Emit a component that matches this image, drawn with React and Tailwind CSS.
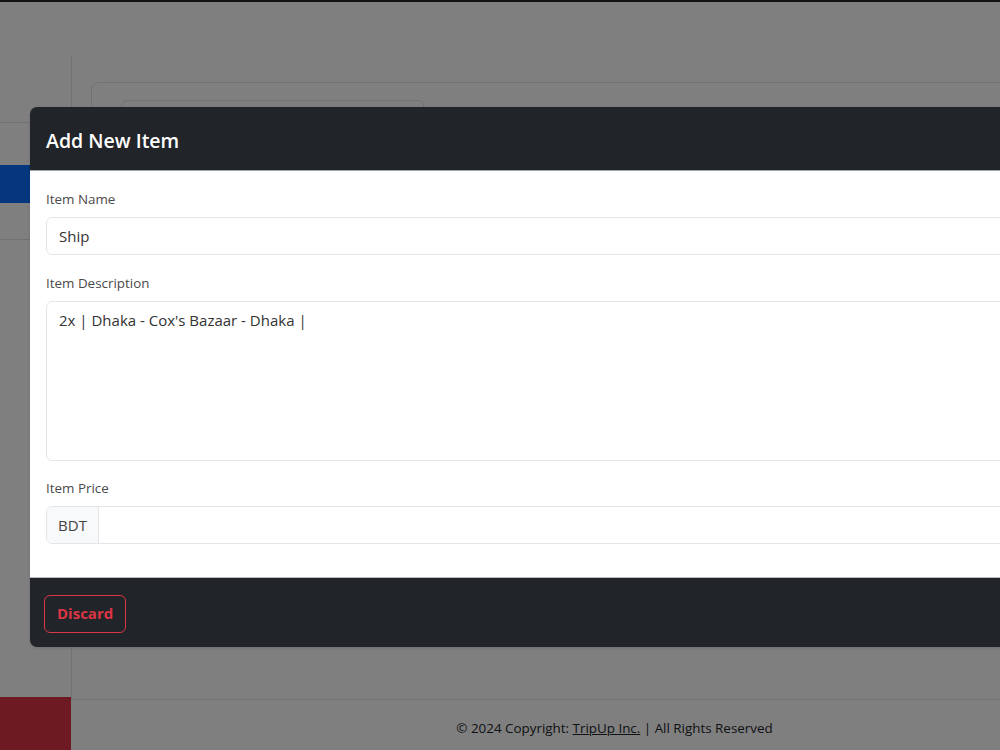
import { useState } from "react";

const font = { fontFamily: '"Open Sans", "Noto Sans", Arial, sans-serif' };

function Sidebar() {
  return (
    <aside className="w-[72px] shrink-0 flex flex-col">
      <div className="h-[53px] shrink-0" />
      <div className="flex-1 border-r border-[#dee2e6] flex flex-col">
        <div className="h-[68px] shrink-0 border-b border-[#dee2e6]" />
        <div className="h-[42px] shrink-0" />
        <div className="h-[38px] shrink-0 bg-[#0d6efd]" />
        <div className="h-[37px] shrink-0 border-b border-[#dee2e6]" />
      </div>
    </aside>
  );
}

function Footer() {
  return (
    <footer className="flex h-[51px] shrink-0">
      <div className="w-[71px] bg-[#dc3545] mt-[-2px]" />
      <div className="flex-1 border-t border-[#dee2e6] flex items-center justify-center pt-[6px] text-[13.4px] text-[#212529]">
        <span>
          © 2024 Copyright:{" "}
          <a href="#" className="underline text-[#212529]">
            TripUp Inc.
          </a>{" "}
          | All Rights Reserved
        </span>
      </div>
    </footer>
  );
}

function ItemModal() {
  const [name, setName] = useState("Ship");
  const [desc, setDesc] = useState("2x | Dhaka - Cox's Bazaar - Dhaka |");
  const [price, setPrice] = useState("");

  return (
    <div className="absolute left-[30px] top-[107px] w-[1140px] rounded-[7px] overflow-hidden shadow-sm">
      {/* header */}
      <div className="h-[64px] bg-[#212529] border-b border-[#a0a4a8] px-4 pt-[4px] flex items-center">
        <h5 className="text-[19.5px] font-semibold text-white leading-none">Add New Item</h5>
      </div>

      {/* body */}
      <div className="bg-white px-4 pt-[18px] pb-[33px] text-[#212529]">
        <label className="block text-[13.4px] text-[#4a4a4a] mb-[8px] leading-5">Item Name</label>
        <input
          value={name}
          onChange={(e) => setName(e.target.value)}
          className="w-full h-[38px] px-3 text-[15px] text-[#333] border border-[#e3e5e8] rounded-[6px] outline-none"
        />

        <label className="block text-[13.4px] text-[#4a4a4a] mt-[18px] mb-[8px] leading-5">Item Description</label>
        <textarea
          value={desc}
          onChange={(e) => setDesc(e.target.value)}
          className="block w-full h-[160px] px-3 py-[7px] text-[15px] text-[#333] border border-[#e3e5e8] rounded-[6px] outline-none resize-none"
        />

        <label className="block text-[13.4px] text-[#4a4a4a] mt-[17px] mb-[8px] leading-5">Item Price</label>
        <div className="flex h-[38px] border border-[#e3e5e8] rounded-[6px] overflow-hidden">
          <span className="w-[52px] shrink-0 flex items-center justify-center bg-[#f8f9fa] border-r border-[#e3e5e8] text-[15px] text-[#444]">
            BDT
          </span>
          <input
            value={price}
            onChange={(e) => setPrice(e.target.value)}
            className="flex-1 px-3 text-[15px] outline-none"
          />
        </div>
      </div>

      {/* footer */}
      <div className="h-[70px] bg-[#212529] border-t border-[#b8bcc0] px-[14px] pt-[2px] flex items-center">
        <button className="h-[38px] px-3 border border-[#dc3545] rounded-[6px] text-[#dc3545] text-[15px] font-bold">
          Discard
        </button>
      </div>
    </div>
  );
}

export default function App() {
  return (
    <div className="relative w-[1000px] h-[750px] overflow-hidden bg-white" style={font}>
      <div className="w-[1158px] h-full flex flex-col">
        <div className="h-[2px] shrink-0 bg-[#212529]" />
        <div className="flex-1 min-h-0 flex">
          <Sidebar />
          <main className="flex-1 pt-[80px] pl-[19px] overflow-hidden">
            <div className="h-[520px] border border-[#dee2e6] rounded-[8px] pt-[17px] pl-[29px]">
              <div className="w-[303px] h-[40px] border border-[#dee2e6] rounded-[6px]" />
            </div>
          </main>
        </div>
        <Footer />
      </div>

      {/* backdrop */}
      <div className="absolute inset-0 bg-black/50" />

      <ItemModal />
    </div>
  );
}
